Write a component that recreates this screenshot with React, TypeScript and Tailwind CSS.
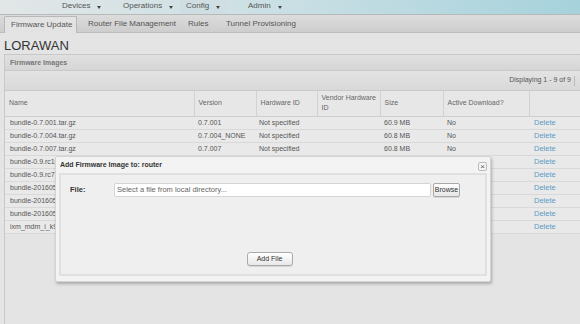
import React from 'react';

const rows = [
  { name: 'bundle-0.7.001.tar.gz', version: '0.7.001', hw: 'Not specified', size: '60.9 MB', active: 'No' },
  { name: 'bundle-0.7.004.tar.gz', version: '0.7.004_NONE', hw: 'Not specified', size: '60.8 MB', active: 'No' },
  { name: 'bundle-0.7.007.tar.gz', version: '0.7.007', hw: 'Not specified', size: '60.8 MB', active: 'No' },
  { name: 'bundle-0.9.rc10.tar.gz', version: '', hw: '', size: '', active: '' },
  { name: 'bundle-0.9.rc7.tar.gz', version: '', hw: '', size: '', active: '' },
  { name: 'bundle-20160512.tar.gz', version: '', hw: '', size: '', active: '' },
  { name: 'bundle-20160518.tar.gz', version: '', hw: '', size: '', active: '' },
  { name: 'bundle-20160524.tar.gz', version: '', hw: '', size: '', active: '' },
  { name: 'ixm_mdm_i_k9.tar.gz', version: '', hw: '', size: '', active: '' },
];

const Caret = () => (
  <span className="inline-block ml-[7px] mt-[6px] w-0 h-0 border-l-[2px] border-r-[2px] border-t-[3px] border-l-transparent border-r-transparent border-t-[#444]" />
);

const App: React.FC = () => {
  return (
    <div className="w-[580px] h-[324px] overflow-hidden bg-[#e4e4e4] text-[#555] font-['Liberation_Sans',Arial,sans-serif] relative">
      {/* top menu */}
      <div className="h-[14px] flex bg-gradient-to-r from-[#e2e6e7] via-[#c9dfe4] to-[#a6d2dc] text-[8px] leading-[12px] text-[#555] whitespace-nowrap">
        <div className="w-[62px] shrink-0" />
        <div className="w-[61px] shrink-0 flex items-start">
          <span>Devices</span>
          <Caret />
        </div>
        <div className="w-[57px] shrink-0 flex items-start">
          <span>Operations</span>
          <Caret />
        </div>
        <div className="w-[47px] shrink-0 flex items-start bg-[#cfdee2] pl-[6px]">
          <span>Config</span>
          <Caret />
        </div>
        <div className="w-[21px] shrink-0" />
        <div className="w-[40px] shrink-0 flex items-start">
          <span>Admin</span>
          <Caret />
        </div>
      </div>

      {/* tabs */}
      <div className="h-[19px] flex items-end border-t border-[#b6b9ba] border-b border-b-[#bdbdbd] bg-gradient-to-b from-[#dcdcdc] to-[#cdcdcd] text-[8px] text-[#555] whitespace-nowrap">
        <div className="w-[4px] shrink-0" />
        <div className="w-[73px] shrink-0 h-[17px] -mb-px bg-[#e3e3e3] border border-b-0 border-[#b8b8b8] rounded-tl-[2px] pl-[6px] leading-[16px]">
          Firmware Update
        </div>
        <div className="w-[111px] shrink-0 h-[16px] pl-[11px] leading-[15px]">Router File Management</div>
        <div className="w-[38px] shrink-0 h-[16px] leading-[15px]">Rules</div>
        <div className="w-[80px] shrink-0 h-[16px] leading-[15px]">Tunnel Provisioning</div>
      </div>

      <div className="pl-[4px]">
        <div className="h-[21px] pt-[6px] text-[13px] leading-[14px] text-[#333]">LORAWAN</div>

        {/* panel */}
        <div className="border-l border-t border-[#c8c8c8] h-[270px]">
          <div className="h-[16px] bg-gradient-to-b from-[#e0e0e0] to-[#d6d6d6] border-b border-[#c8c8c8] pl-[5px] text-[7px] leading-[16px] font-bold text-[#777]">
            Firmware Images
          </div>
          <div className="h-[20px] bg-gradient-to-b from-[#e3e3e3] to-[#d9d9d9] border-b border-[#c8c8c8] flex justify-end items-center pr-[5px] text-[7px] text-[#555]">
            <span>Displaying 1 - 9 of 9</span>
            <span className="ml-[3px] w-px h-[10px] bg-[#bbb]" />
          </div>

          <table className="w-[576px] border-collapse text-[7px] table-fixed">
            <colgroup>
              <col className="w-[189px]" />
              <col className="w-[62px]" />
              <col className="w-[61px]" />
              <col className="w-[63px]" />
              <col className="w-[63px]" />
              <col className="w-[86px]" />
              <col className="w-[52px]" />
            </colgroup>
            <thead>
              <tr className="h-[25px] bg-[#e7e7e7] border-b border-[#cdcdcd]">
                {['Name', 'Version', 'Hardware ID', 'Vendor Hardware ID', 'Size', 'Active Download?', ''].map((h, i) => (
                  <th
                    key={i}
                    className={`font-normal text-left align-middle pl-[4px] leading-[10px] text-[#666] ${i < 6 ? 'border-r border-[#d2d2d2]' : ''}`}
                  >
                    {h}
                  </th>
                ))}
              </tr>
            </thead>
            <tbody>
              {rows.map((r) => (
                <tr key={r.name} className="h-[13px] bg-[#e9e9e9] border-b border-[#d9d9d9]">
                  <td className="pl-[5px] leading-[12px] whitespace-nowrap overflow-hidden">{r.name}</td>
                  <td className="pl-[4px] leading-[12px] whitespace-nowrap">{r.version}</td>
                  <td className="pl-[3px] leading-[12px] whitespace-nowrap">{r.hw}</td>
                  <td />
                  <td className="pl-[4px] leading-[12px]">{r.size}</td>
                  <td className="pl-[4px] leading-[12px]">{r.active}</td>
                  <td className="pl-[5px] leading-[12px] text-[#5c9cc5] text-[7.5px]">Delete</td>
                </tr>
              ))}
            </tbody>
          </table>
        </div>
      </div>

      {/* modal */}
      <div className="absolute left-[55px] top-[156px] w-[436px] h-[126px] bg-[#f3f3f3] border border-[#d4d4d4] rounded-[2px] shadow-[1px_2px_3px_rgba(0,0,0,0.25)] px-[3px]">
        <div className="h-[16px] flex items-center justify-between pl-[1px]">
          <span className="text-[7px] font-bold text-[#333]">Add Firmware Image to: router</span>
          <span className="w-[9px] h-[9px] mt-[2px] border border-[#bbb] rounded-[2px] bg-[#f6f6f6] text-[8px] leading-[7px] text-center text-[#555]">×</span>
        </div>
        <div className="h-[103px] bg-[#efefef] border-2 border-[#e0e0e0] relative">
          <div className="flex items-center mt-[8px] ml-[9px] h-[14px]">
            <span className="w-[44px] text-[7.5px] font-bold text-[#333]">File:</span>
            <div className="w-[317px] h-[14px] bg-white border border-[#d4d4d4] rounded-[2px] text-[7.5px] leading-[12px] pl-[2px] text-[#666]">
              Select a file from local directory...
            </div>
            <button className="ml-[2px] w-[27px] h-[14px] bg-gradient-to-b from-white to-[#e6e6e6] border border-[#aaa] rounded-[2px] text-[7px] leading-[12px] text-[#333] shadow-[0_1px_0_rgba(0,0,0,0.1)]">
              Browse
            </button>
          </div>
          <div className="flex justify-center mt-[55px] pr-[7px]">
            <button className="w-[46px] h-[14px] bg-gradient-to-b from-white to-[#e8e8e8] border border-[#aaa] rounded-[3px] text-[7px] leading-[12px] text-[#333] shadow-[0_1px_0_rgba(0,0,0,0.1)]">
              Add File
            </button>
          </div>
        </div>
      </div>
    </div>
  );
};

export default App;
